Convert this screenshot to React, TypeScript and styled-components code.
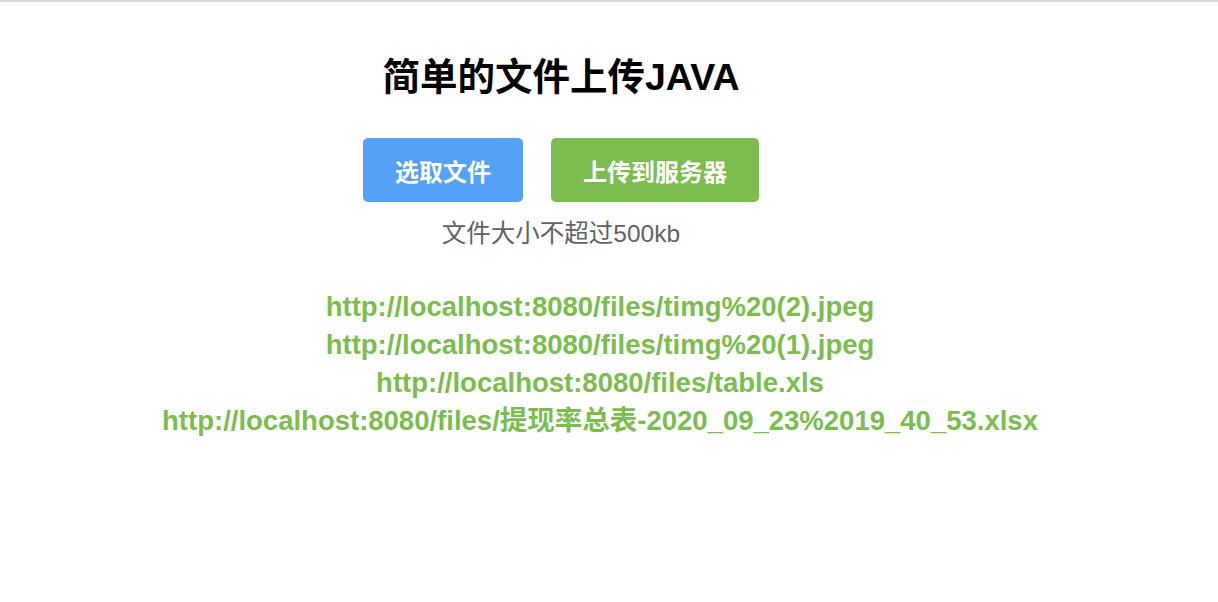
import React from "react";
import styled, { createGlobalStyle } from "styled-components";

const GlobalStyle = createGlobalStyle`
  html, body {
    margin: 0;
    padding: 0;
    background: #ffffff;
  }
  body {
    font-family: "Liberation Sans", "Noto Sans CJK SC", sans-serif;
  }
`;

const Page = styled.div`
  border-top: 2px solid #d9d9de;
  min-height: 600px;
  display: flex;
  flex-direction: column;
`;

const Upper = styled.section`
  display: flex;
  flex-direction: column;
  align-items: center;
  padding-right: 96px;
`;

const Title = styled.h1`
  margin: 50px 0 0;
  font-size: 37.5px;
  line-height: 50px;
  font-weight: 700;
  color: #000000;
`;

const ButtonRow = styled.div`
  display: flex;
  gap: 28px;
  margin-top: 36px;
`;

const ActionButton = styled.button<{ $tone: "blue" | "green"; $w: number }>`
  width: ${(p) => p.$w}px;
  height: 64px;
  border: none;
  border-radius: 5px;
  background: ${(p) => (p.$tone === "blue" ? "#54a1f7" : "#7cbd50")};
  color: #ffffff;
  font-family: "Liberation Sans", "Noto Sans CJK SC", sans-serif;
  font-size: 24px;
  font-weight: 700;
  cursor: pointer;
  padding: 0;
`;

const Hint = styled.p`
  margin: 17px 0 0;
  font-size: 24.5px;
  line-height: 30px;
  color: #606266;
`;

const Links = styled.ul`
  list-style: none;
  margin: 39px 0 0;
  padding: 0 18px 0 0;
  display: flex;
  flex-direction: column;
  align-items: center;
`;

const LinkItem = styled.li`
  font-size: 27.5px;
  line-height: 38px;
  height: 38px;
  font-weight: 700;
`;

const FileLink = styled.a`
  color: #7cbd50;
  text-decoration: none;
`;

const files = [
  "http://localhost:8080/files/timg%20(2).jpeg",
  "http://localhost:8080/files/timg%20(1).jpeg",
  "http://localhost:8080/files/table.xls",
  "http://localhost:8080/files/提现率总表-2020_09_23%2019_40_53.xlsx",
];

export default function App() {
  return (
    <>
      <GlobalStyle />
      <Page>
        <Upper>
          <Title>简单的文件上传JAVA</Title>
          <ButtonRow>
            <ActionButton $tone="blue" $w={160}>选取文件</ActionButton>
            <ActionButton $tone="green" $w={208}>上传到服务器</ActionButton>
          </ButtonRow>
          <Hint>文件大小不超过500kb</Hint>
        </Upper>
        <Links>
          {files.map((f) => (
            <LinkItem key={f}>
              <FileLink href="#">{f}</FileLink>
            </LinkItem>
          ))}
        </Links>
      </Page>
    </>
  );
}
